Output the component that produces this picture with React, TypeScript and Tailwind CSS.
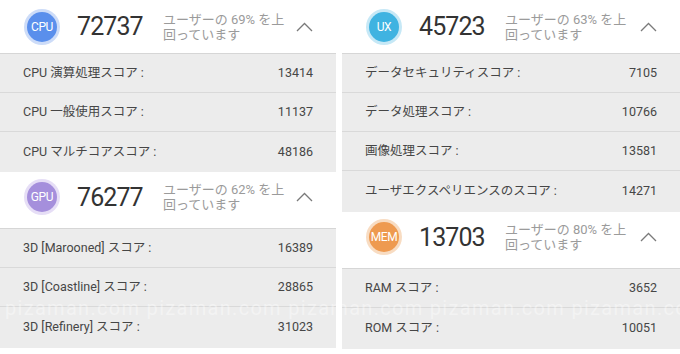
type Row = { label: string; value: string }

interface Section {
  key: string
  score: string
  pct: string
  color: string
  ring: string
  rows: Row[]
  first?: boolean
  lastRowClass: string
}

const left: Section[] = [
  {
    key: 'CPU',
    score: '72737',
    pct: '69%',
    color: 'bg-[#5a8fec]',
    ring: 'ring-[#cddcf8]',
    first: true,
    lastRowClass: 'h-[40px]',
    rows: [
      { label: 'CPU 演算処理スコア :', value: '13414' },
      { label: 'CPU 一般使用スコア :', value: '11137' },
      { label: 'CPU マルチコアスコア :', value: '48186' },
    ],
  },
  {
    key: 'GPU',
    score: '76277',
    pct: '62%',
    color: 'bg-[#a58fdc]',
    ring: 'ring-[#e6def6]',
    lastRowClass: 'h-[41px]',
    rows: [
      { label: '3D [Marooned] スコア :', value: '16389' },
      { label: '3D [Coastline] スコア :', value: '28865' },
      { label: '3D [Refinery] スコア :', value: '31023' },
    ],
  },
]

const right: Section[] = [
  {
    key: 'UX',
    score: '45723',
    pct: '63%',
    color: 'bg-[#3fb3e1]',
    ring: 'ring-[#c6e8f6]',
    first: true,
    lastRowClass: 'h-[41px]',
    rows: [
      { label: 'データセキュリティスコア :', value: '7105' },
      { label: 'データ処理スコア :', value: '10766' },
      { label: '画像処理スコア :', value: '13581' },
      { label: 'ユーザエクスペリエンスのスコア :', value: '14271' },
    ],
  },
  {
    key: 'MEM',
    score: '13703',
    pct: '80%',
    color: 'bg-[#ee9a50]',
    ring: 'ring-[#f8dcc2]',
    lastRowClass: 'h-[41px]',
    rows: [
      { label: 'RAM スコア :', value: '3652' },
      { label: 'ROM スコア :', value: '10051' },
    ],
  },
]

function Chevron() {
  return (
    <svg width="17" height="10" viewBox="0 0 17 10" className="text-[#7a7a7a]">
      <polyline points="1,9 8.5,1.5 16,9" fill="none" stroke="currentColor" strokeWidth="1.3" />
    </svg>
  )
}

function ScoreSection({ s }: { s: Section }) {
  return (
    <div className="flex flex-col">
      <div
        className={`flex items-center border-b border-[#d6d6d6] bg-white pl-[27px] pr-[23px] ${
          s.first ? 'h-[54px]' : 'h-[57px] pb-[6px]'
        }`}
      >
        <div
          className={`w-[30px] h-[30px] rounded-full ring-[3px] ${s.ring} ${s.color} flex items-center justify-center text-white text-[12px] tracking-[-0.4px]`}
        >
          {s.key}
        </div>
        <div className="ml-[20px] w-[86px] text-[25px] leading-none text-[#333] tracking-[-0.9px]">{s.score}</div>
        <div className="text-[13px] leading-[15px] text-[#9b9b9b]">
          ユーザーの {s.pct} を上
          <br />
          回っています
        </div>
        <div className="ml-auto">
          <Chevron />
        </div>
      </div>
      {s.rows.map((r, i) => {
        const last = i === s.rows.length - 1
        return (
          <div
            key={r.label}
            className={`flex items-center justify-between bg-[#ececec] pl-[23px] pr-[23px] text-[12.5px] text-[#464646] ${
              last ? s.lastRowClass : 'h-[39px] border-b border-[#d9d9d9]'
            }`}
          >
            <span>{r.label}</span>
            <span>{r.value}</span>
          </div>
        )
      })}
    </div>
  )
}

export default function App() {
  return (
    <div
      className="relative w-[680px] h-[354px] overflow-hidden bg-white flex gap-[6px]"
      style={{ fontFamily: 'Roboto, "Noto Sans CJK JP", sans-serif' }}
    >
      <div className="w-[336px] flex flex-col">
        {left.map((s) => (
          <ScoreSection key={s.key} s={s} />
        ))}
      </div>
      <div className="flex-1 flex flex-col">
        {right.map((s) => (
          <ScoreSection key={s.key} s={s} />
        ))}
      </div>

      {/* watermark */}
      <div className="pointer-events-none absolute left-[5px] top-[298px] whitespace-nowrap text-[20px] leading-none tracking-[1.3px] text-white/40">
        pizaman.com pizaman.com pizaman.com pizaman.com pizaman.com
      </div>
    </div>
  )
}
